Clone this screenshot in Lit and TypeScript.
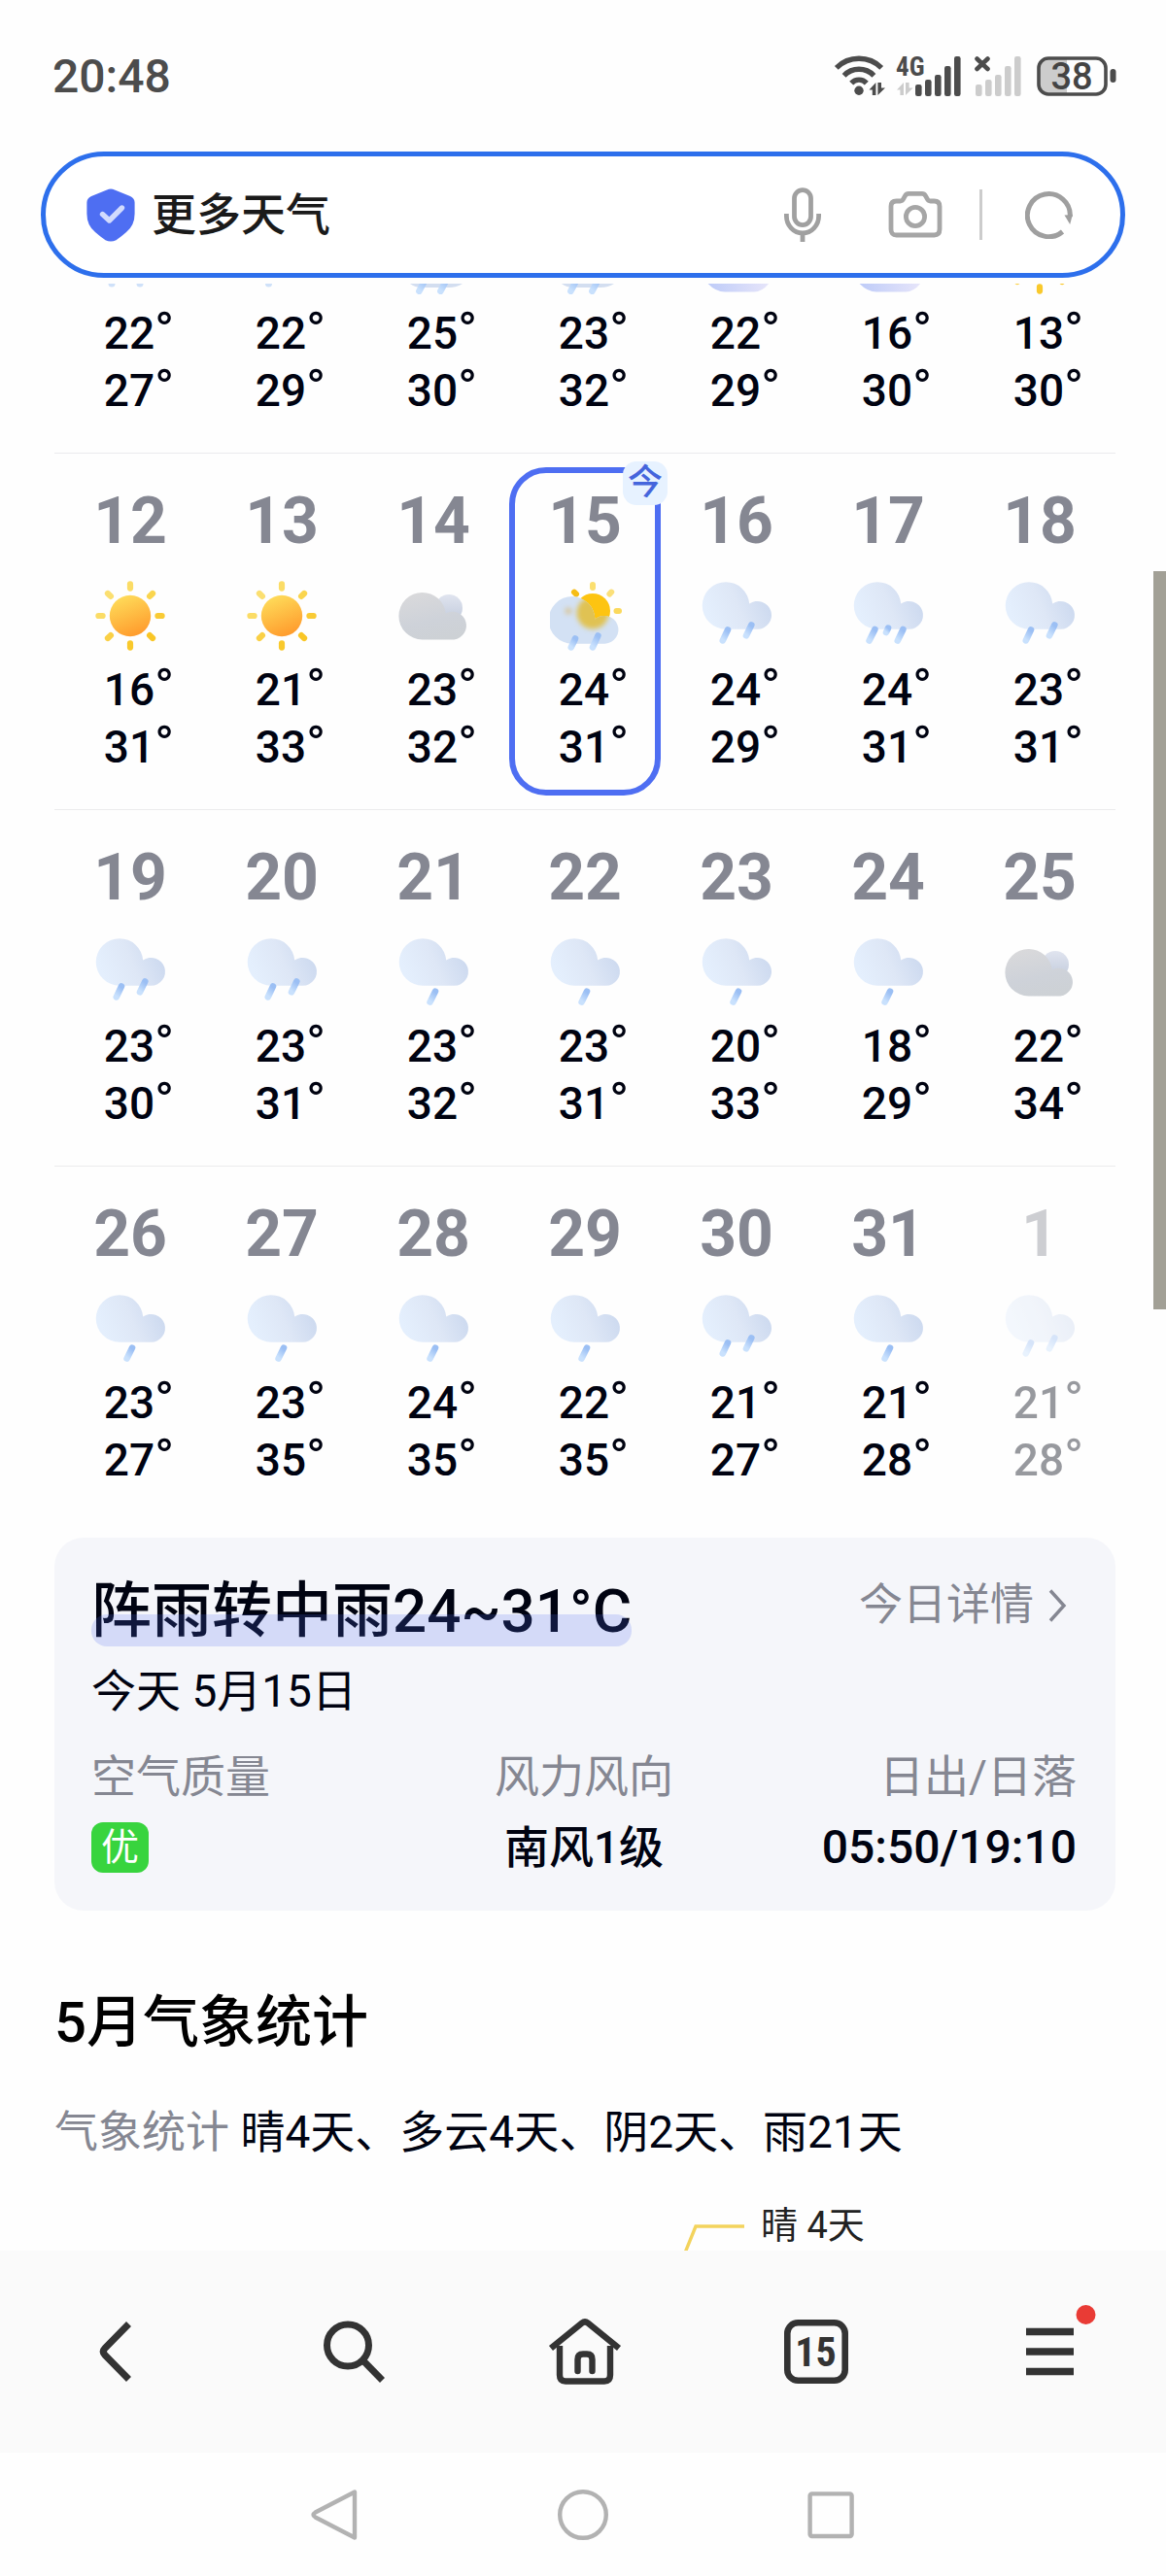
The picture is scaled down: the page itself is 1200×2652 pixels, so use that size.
import { LitElement, html, svg, css, nothing } from "lit";
import { customElement, property } from "lit/decorators.js";
import { classMap } from "lit/directives/class-map.js";

type Sky =
  | "sunny"
  | "overcast"
  | "today"
  | "rain1"
  | "rain2"
  | "rain3"
  | "tailTwo"
  | "tailOne"
  | "tailRain"
  | "tailCloud";

interface Day {
  date?: number;
  sky: Sky;
  low: number;
  high: number;
  today?: boolean;
  faded?: boolean;
}

const day = (date: number, sky: Sky, low: number, high: number): Day => ({ date, sky, low, high });

const WEEKS: Day[][] = [
  [
    { sky: "tailTwo", low: 22, high: 27 },
    { sky: "tailOne", low: 22, high: 29 },
    { sky: "tailRain", low: 25, high: 30 },
    { sky: "tailRain", low: 23, high: 32 },
    { sky: "tailCloud", low: 22, high: 29 },
    { sky: "tailCloud", low: 16, high: 30 },
    { sky: "sunny", low: 13, high: 30 },
  ],
  [
    day(12, "sunny", 16, 31),
    day(13, "sunny", 21, 33),
    day(14, "overcast", 23, 32),
    { date: 15, sky: "today", low: 24, high: 31, today: true },
    day(16, "rain2", 24, 29),
    day(17, "rain3", 24, 31),
    day(18, "rain2", 23, 31),
  ],
  [
    day(19, "rain2", 23, 30),
    day(20, "rain2", 23, 31),
    day(21, "rain1", 23, 32),
    day(22, "rain1", 23, 31),
    day(23, "rain1", 20, 33),
    day(24, "rain1", 18, 29),
    day(25, "overcast", 22, 34),
  ],
  [
    day(26, "rain1", 23, 27),
    day(27, "rain1", 23, 35),
    day(28, "rain1", 24, 35),
    day(29, "rain1", 22, 35),
    day(30, "rain2", 21, 27),
    day(31, "rain1", 21, 28),
    { date: 1, sky: "rain2", low: 21, high: 28, faded: true },
  ],
];

const RAY_COLORS = ["#fbdc66", "#fad54e", "#f9cb35", "#f9c626", "#f9c92c", "#fad046", "#fbdc66", "#fbdf70"];

const drop = (x1: number, y1: number, x2: number, y2: number) =>
  svg`<line x1=${x1} y1=${y1} x2=${x2} y2=${y2} stroke="url(#drop)" stroke-width="6.6" stroke-linecap="round"/>`;

const rainCloud = svg`<path fill="url(#rain)"
  d="M25 1.2A24.2 24.2 0 0 1 49.2 23.6A14.4 14.4 0 1 1 57.5 49.7H25A24.25 24.25 0 0 1 25 1.2Z"/>`;

@customElement("weather-icon")
export class WeatherIcon extends LitElement {
  @property() sky: Sky = "sunny";
  @property({ type: Boolean }) tail = false;

  static styles = css`
    :host { display: block; line-height: 0; }
    svg { display: block; }
  `;

  private art() {
    switch (this.sky) {
      case "sunny":
        return svg`
          ${RAY_COLORS.map((color, i) => {
            const a = ((i * 45 - 90) * Math.PI) / 180;
            const [c, s] = [Math.cos(a), Math.sin(a)];
            return svg`<line x1=${36 + c * 28.4} y1=${36 + s * 28.4} x2=${36 + c * 32.6} y2=${36 + s * 32.6}
              stroke=${color} stroke-width="6.2" stroke-linecap="round"/>`;
          })}
          <circle cx="36" cy="36" r="21.2" fill="url(#sun)"/>`;
      case "overcast":
        return svg`
          <circle cx="52" cy="28" r="14" fill="url(#back)"/>
          <path fill="url(#gray)" d="M24.6 12A24.2 24.2 0 0 1 48.8 33.4A14.4 14.4 0 1 1 57.4 60.4H24.6A24.2 24.2 0 0 1 24.6 12Z"/>`;
      case "today":
        return svg`
          <g stroke-width="6" stroke-linecap="round">
            <line x1="44" y1="4" x2="44" y2="7" stroke="#fbdf70"/>
            <line x1="61.4" y1="13.6" x2="63.2" y2="11.6" stroke="#fbe07a"/>
            <line x1="68.5" y1="31" x2="71" y2="31" stroke="#fbd95c"/>
            <line x1="25" y1="11.6" x2="27" y2="13.6" stroke="#f6bd16"/>
          </g>
          <circle cx="44" cy="31" r="18" fill="#fdc411"/>
          <g clip-path="url(#cloudClip)">
            <rect width="72" height="72" fill="#d3e1f4"/>
            <g filter="url(#soft)">
              <circle cx="44" cy="33" r="16.5" fill="#e0c253"/>
              <circle cx="19" cy="31" r="3.5" fill="#d9c79a"/>
            </g>
          </g>
          ${drop(26, 59.5, 21.8, 68.4)} ${drop(49.4, 56.5, 44, 68.4)}`;
      case "rain1":
        return svg`${rainCloud} ${drop(38, 55.6, 32.6, 66.6)}`;
      case "rain2":
        return svg`${rainCloud} ${drop(27, 50.4, 21.8, 61.4)} ${drop(51.3, 45.4, 46, 56.4)}`;
      case "rain3":
        return svg`${rainCloud} ${drop(22.4, 50, 16.6, 61.6)} ${drop(36, 48.6, 34, 53)} ${drop(51.4, 50, 45.8, 61.6)}`;
      case "tailTwo":
        return svg`<g fill="#cfe1f9"><circle cx="17" cy="61" r="3.5"/><circle cx="46" cy="61" r="3.5"/></g>`;
      case "tailOne":
        return svg`<circle cx="22.5" cy="61" r="3.5" fill="#cfe1f9"/>`;
      case "tailRain":
        return svg`
          <path d="M10 58L12 61Q17 65 24 65H52Q60 65 66 61L68 58Z" fill="#d3def0"/>
          ${drop(28, 56, 21.4, 68.8)} ${drop(50, 56, 43.4, 68.8)}`;
      case "tailCloud":
        return svg`<path d="M3 57Q13 69.5 24 69.5H54Q64 69.5 72 57Z" fill="url(#lilac)"/>`;
    }
  }

  render() {
    return html`<svg width="72" height=${this.tail ? 11 : 72} viewBox=${this.tail ? "0 61 72 11" : "0 0 72 72"} aria-hidden="true"
      overflow=${this.tail ? "hidden" : "visible"}>
      <defs>
        <linearGradient id="sun" x1="0.3" y1="0" x2="0.7" y2="1">
          <stop offset="0" stop-color="#fedc5a"/><stop offset="1" stop-color="#ff992b"/>
        </linearGradient>
        <linearGradient id="rain" x1="0.1" y1="0.75" x2="1" y2="0.5">
          <stop offset="0" stop-color="#e4effd"/><stop offset="0.5" stop-color="#dee7f6"/><stop offset="1" stop-color="#ccd9ef"/>
        </linearGradient>
        <linearGradient id="gray" x1="0.3" y1="0" x2="0.6" y2="1">
          <stop offset="0" stop-color="#d9d9db"/><stop offset="0.6" stop-color="#ced2d9"/><stop offset="1" stop-color="#cdd1d5"/>
        </linearGradient>
        <linearGradient id="back" x1="0.5" y1="0" x2="0.5" y2="1">
          <stop offset="0" stop-color="#e0e4ef"/><stop offset="1" stop-color="#c2cbdc"/>
        </linearGradient>
        <linearGradient id="lilac" x1="0" y1="0" x2="1" y2="0">
          <stop offset="0" stop-color="#bccaf8"/><stop offset="1" stop-color="#e8e6fa"/>
        </linearGradient>
        <linearGradient id="drop" x1="0.7" y1="0" x2="0.3" y2="1">
          <stop offset="0" stop-color="#9bbff4"/><stop offset="1" stop-color="#c9e1fd"/>
        </linearGradient>
        <clipPath id="cloudClip">
          <path d="M23 16A24 24 0 0 1 46.4 39.6A14.4 14.4 0 1 1 56.6 64.7H23A24.3 24.3 0 0 1 23 16Z"/>
        </clipPath>
        <filter id="soft" x="-50%" y="-50%" width="200%" height="200%"><feGaussianBlur stdDeviation="2.4"/></filter>
      </defs>
      ${this.art()}
    </svg>`;
  }
}

@customElement("month-calendar")
export class MonthCalendar extends LitElement {
  static styles = css`
    :host { display: block; }
    .week {
      display: grid;
      grid-template-columns: repeat(7, 1fr);
      border-bottom: 1px solid #ebebed;
    }
    .week:last-child { border-bottom: none; }
    .day {
      position: relative;
      display: flex;
      flex-direction: column;
      align-items: center;
      padding: 40px 0 34px;
    }
    .day.cut { padding-top: 0; }
    .date {
      font-size: 66px;
      line-height: 60px;
      font-weight: 700;
      color: #858792;
      margin-bottom: 31px;
    }
    .temps {
      margin-top: 11px;
      padding-left: 18px;
      font-size: 46px;
      line-height: 59px;
      font-weight: 500;
      color: #000311;
    }
    .temps div { white-space: nowrap; }
    .degree { font-size: 54px; line-height: 0; font-weight: 400; }
    .faded .date, .faded .temps, .faded weather-icon { opacity: 0.4; }
    .ring {
      position: absolute;
      inset: 14px 0;
      border: 6px solid #4e6ef2;
      border-radius: 38px;
      pointer-events: none;
    }
    .badge {
      position: absolute;
      top: 8px;
      right: -7px;
      width: 46px;
      border-radius: 14px;
      background: #e7f2ff;
      color: #4565dc;
      font-size: 36px;
      line-height: 45px;
      font-weight: 500;
      text-align: center;
    }
  `;

  private temp(value: number) {
    return html`<div>${value}<span class="degree">°</span></div>`;
  }

  render() {
    return WEEKS.map(
      (week) => html`<div class="week">
        ${week.map(
          (d) => html`<div class=${classMap({ day: true, cut: d.date === undefined, faded: !!d.faded })}>
            ${d.today ? html`<div class="ring"></div><div class="badge">今</div>` : nothing}
            ${d.date === undefined ? nothing : html`<div class="date">${d.date}</div>`}
            <weather-icon .sky=${d.sky} .tail=${d.date === undefined}></weather-icon>
            <div class="temps">${this.temp(d.low)}${this.temp(d.high)}</div>
          </div>`
        )}
      </div>`
    );
  }
}

const bars = (x: number, color: string) =>
  [29, 24, 19, 10, 0].map(
    (top, i) => svg`<rect x=${x + i * 10} y=${top} width="6.6" height=${41 - top} rx="2.2" fill=${color}/>`
  );

@customElement("app-root")
export class AppRoot extends LitElement {
  static styles = css`
    :host {
      display: block;
      font-family: Roboto, "Noto Sans CJK SC", sans-serif;
      color: #000311;
    }
    * { box-sizing: border-box; }
    svg { display: block; flex: none; }
    h1, h2, p, dl, dt, dd { margin: 0; font-weight: inherit; }
    button { border: 0; padding: 0; margin: 0; background: none; font: inherit; color: inherit; cursor: pointer; }
    .page {
      position: relative;
      display: flex;
      flex-direction: column;
      min-height: 100vh;
      background: #fefefe;
      overflow: hidden;
    }
    .status {
      display: flex;
      align-items: center;
      justify-content: space-between;
      padding: 50px 51px 48px 54px;
      font-size: 48px;
      line-height: 50px;
      font-weight: 500;
      color: #4c4c4c;
    }
    .signals { display: flex; align-items: center; gap: 14px; }
    .signals svg { overflow: visible; }
    .net { font: 700 27px "Liberation Sans Narrow", "Roboto Condensed", Roboto, sans-serif; }
    .level { font: 500 38px Roboto, sans-serif; }
    .search {
      display: flex;
      align-items: center;
      margin: 0 42px 6px;
      padding: 32px 49px 32px 42px;
      border: 5px solid #2d6fec;
      border-radius: 65px;
      background: #fff;
    }
    .query {
      flex: 1;
      min-width: 0;
      margin-left: 17px;
      padding: 0;
      border: 0;
      outline: 0;
      background: none;
      font-family: inherit;
      font-size: 46px;
      line-height: 56px;
      height: 56px;
      font-weight: 500;
      color: #1a1a1a;
    }
    .tools { display: flex; align-items: center; }
    .camera { margin-left: 69px; }
    .rule { width: 3px; height: 52px; margin: 0 44px 0 38px; background: #ccc; }
    main { flex: 1; padding: 0 52px 0 56px; overflow: hidden; }
    .card {
      margin-top: 16px;
      padding: 40px 40px 37px 38px;
      border-radius: 30px;
      background: #f5f6fa;
      font-size: 46px;
      line-height: 56px;
    }
    .card-head { display: flex; align-items: flex-start; justify-content: space-between; }
    .summary {
      position: relative;
      font-size: 62px;
      line-height: 72px;
      font-weight: 500;
    }
    .summary::after {
      content: "";
      position: absolute;
      inset: auto 0 0;
      height: 33px;
      border-radius: 16px;
      background: rgba(78, 110, 242, 0.2);
    }
    .detail {
      display: flex;
      align-items: center;
      gap: 14px;
      padding: 2px 10px 0 0;
      color: #858792;
      font-size: 45px;
      text-decoration: none;
    }
    .date { margin-top: 18px; }
    .facts { display: flex; justify-content: space-between; margin-top: 32px; }
    .facts dt { color: #858792; margin-bottom: 17px; }
    .facts dd { font-weight: 500; display: flex; align-items: center; min-height: 56px; }
    .fact:nth-child(1) { flex: 1; }
    .fact:nth-child(2) { text-align: center; }
    .fact:nth-child(2) dd { justify-content: center; }
    .fact:nth-child(3) { flex: 1; text-align: right; }
    .fact:nth-child(3) dd { justify-content: flex-end; font-size: 48px; }
    .good {
      width: 59px;
      border-radius: 12px;
      background: #38d43e;
      color: #fff;
      font-size: 39px;
      line-height: 52px;
      font-weight: 400;
      text-align: center;
    }
    .stats-title { margin-top: 79px; font-size: 58px; line-height: 72px; font-weight: 500; color: #000; }
    .stats { margin-top: 49px; font-size: 46px; line-height: 56px; }
    .stats-label { color: #858792; font-size: 45px; }
    .callout {
      display: flex;
      align-items: flex-end;
      gap: 17px;
      margin-top: 41px;
      padding-left: calc(50% + 102px);
      font-size: 38px;
      line-height: 52px;
      color: #222;
    }
    .toolbar { display: grid; grid-template-columns: repeat(5, 1fr); background: #fafafa; color: #333; }
    .toolbar button { display: flex; align-items: center; justify-content: center; padding: 70px 0; }
    .toolbar svg { overflow: visible; }
    .count { font: 700 42px "Liberation Sans Narrow", "Roboto Condensed", Roboto, sans-serif; }
    .system { display: flex; justify-content: center; align-items: center; gap: 203px; padding: 38px 0; background: #fefefe; }
    .thumb {
      position: absolute;
      top: 588px;
      right: 0;
      width: 13px;
      height: 760px;
      background: #a2a096;
    }
  `;

  private statusBar() {
    return html`<div class="status">
      <span>20:48</span>
      <div class="signals">
        <svg width="49" height="42" viewBox="0 0 49 42" fill="none" stroke="#4c4c4c" stroke-width="5.4">
          <path d="M1.8 11.8A33 33 0 0 1 48.2 11.8M9.6 19.8A21.5 21.5 0 0 1 40.4 19.8M17.2 27.6A10.5 10.5 0 0 1 32.8 27.6"/>
          <circle cx="25" cy="35.2" r="4.7" fill="#4c4c4c" stroke="none"/>
          <path d="M35.5 34.5L42.4 27V40H38.8V34.5ZM44.4 27H48V32.5H52L44.4 40Z" fill="#4c4c4c" stroke="none"/>
        </svg>
        <svg width="67" height="58" viewBox="0 -8 67 58">
          <text class="net" x="0" y="20" fill="#4c4c4c">4G</text>
          <path d="M1 34.5L8 27V40H4.4V34.5ZM10 27H13.6V32.5H17.6L10 40Z" fill="#ccc"/>
          ${bars(20, "#4c4c4c")}
        </svg>
        <svg width="48" height="42" viewBox="0 0 48 42">
          <path d="M2.5 2.5L13.5 13M13.5 2.5L2.5 13" stroke="#4c4c4c" stroke-width="4.6" stroke-linecap="round"/>
          ${bars(1, "#ccc")}
        </svg>
        <svg width="84" height="42" viewBox="-2 0 84 42">
          <path d="M12 3H31V38H12Q3 38 3 29V12Q3 3 12 3Z" fill="#ccc"/>
          <rect x="2" y="2" width="69" height="37" rx="10" fill="none" stroke="#4c4c4c" stroke-width="3.6"/>
          <rect x="75.5" y="13" width="6" height="14" rx="3" fill="#4c4c4c"/>
          <text class="level" x="36" y="34" text-anchor="middle" fill="#444">38</text>
        </svg>
      </div>
    </div>`;
  }

  private searchBar() {
    return html`<div class="search">
      <svg width="50" height="56" viewBox="0 0 50 56">
        <path d="M21 2.4Q25 0.4 29 2.4L45 9Q49.6 11 49.6 15.5V27Q49.6 39 41 46Q34 52 30.5 54.2Q25 56.8 19.5 54.2Q16 52 9 46Q0.4 39 0.4 27V15.5Q0.4 11 5 9Z" fill="#4e6ef2"/>
        <path d="M16.5 27.5L23.5 34L36.5 21" fill="none" stroke="#d2dbfd" stroke-width="5.4" stroke-linecap="round" stroke-linejoin="round"/>
      </svg>
      <input class="query" type="text" aria-label="搜索" .value=${"更多天气"} />
      <div class="tools">
        <button aria-label="语音">
          <svg width="38" height="56" viewBox="0 0 38 56" fill="none" stroke="#a0a0a0" stroke-width="4.8">
            <rect x="10.5" y="2.6" width="17" height="36" rx="8.5"/>
            <path d="M2.4 27V29.5A16.6 17.5 0 0 0 35.6 29.5V27M19 46V56"/>
          </svg>
        </button>
        <button class="camera" aria-label="拍照">
          <svg width="56" height="50" viewBox="0 0 56 50" fill="none" stroke="#a6a6a6" stroke-width="4.8">
            <path d="M8.5 11H12.5Q14.5 11 15.5 9.2L17.6 5.4Q18.8 3.4 21 3.4H35Q37.2 3.4 38.4 5.4L40.5 9.2Q41.5 11 43.5 11H47.5Q53 11 53 16.5V40Q53 46 47.5 46H8.5Q3 46 3 40V16.5Q3 11 8.5 11Z"/>
            <circle cx="28" cy="27" r="9.6"/>
          </svg>
        </button>
        <div class="rule"></div>
        <button aria-label="刷新">
          <svg width="49" height="50" viewBox="0 0 49 50" fill="none" stroke="#9f9f9f" stroke-width="5">
            <path d="M38.5 42.5A22 22 0 1 1 46.3 27"/>
            <path d="M40.5 25.5L48.8 25L46.2 35Z" fill="#9f9f9f" stroke="none"/>
          </svg>
        </button>
      </div>
    </div>`;
  }

  private card() {
    return html`<section class="card">
      <div class="card-head">
        <h1 class="summary">阵雨转中雨24~31°C</h1>
        <a class="detail" href="#today">今日详情
          <svg width="20" height="34" viewBox="0 0 20 34" fill="none" stroke="#858792" stroke-width="3.4"><path d="M3 1.5L17 17L3 32.5"/></svg>
        </a>
      </div>
      <p class="date">今天 5月15日</p>
      <dl class="facts">
        <div class="fact"><dt>空气质量</dt><dd><span class="good">优</span></dd></div>
        <div class="fact"><dt>风力风向</dt><dd>南风1级</dd></div>
        <div class="fact"><dt>日出/日落</dt><dd>05:50/19:10</dd></div>
      </dl>
    </section>`;
  }

  private toolbar() {
    return html`<nav class="toolbar">
      <button aria-label="后退">
        <svg width="36" height="62" viewBox="0 0 36 62" fill="none" stroke="#333" stroke-width="7">
          <path d="M30.5 2.5L6 27.5Q2.6 31 6 34.5L30.5 59.5"/>
        </svg>
      </button>
      <button aria-label="搜索">
        <svg width="64" height="64" viewBox="-3 0 64 64" fill="none" stroke="#333" stroke-width="7">
          <circle cx="27" cy="25.5" r="21.5"/><path d="M42.5 41L62.5 61.5"/>
        </svg>
      </button>
      <button aria-label="主页">
        <svg width="74" height="68" viewBox="-2 0 74 68" fill="none" stroke="#333" stroke-width="6.4">
          <path d="M2 30.5L34 4.6Q37 2.2 40 4.6L72 30.5"/>
          <path d="M11 28V58Q11 64.5 17 64.5H57Q63 64.5 63 58V28"/>
          <path d="M29.5 54V42Q29.5 36.5 35 36.5H39Q44.5 36.5 44.5 42V54" stroke-linecap="round"/>
        </svg>
      </button>
      <button aria-label="标签页">
        <svg width="66" height="66" viewBox="0 0 66 66">
          <rect x="3.3" y="3.3" width="59.4" height="59.4" rx="11" fill="none" stroke="#333" stroke-width="6.6"/>
          <text class="count" x="32.5" y="48" text-anchor="middle" fill="#333">15</text>
        </svg>
      </button>
      <button aria-label="菜单">
        <svg width="49" height="50" viewBox="0 0 49 50">
          <path d="M0 4.5H49M0 25H49M0 45.5H49" stroke="#333" stroke-width="7.6"/>
          <circle cx="61.5" cy="-13" r="10" fill="#e93b35"/>
        </svg>
      </button>
    </nav>`;
  }

  private systemNav() {
    return html`<nav class="system">
      <button aria-label="返回">
        <svg width="52" height="52" viewBox="0 0 52 52" fill="none" stroke="#b2b2b2" stroke-width="4.4" stroke-linejoin="round">
          <path d="M46 2.5V49.5L5.5 28.5Q1.5 26 5.5 23.5Z"/>
        </svg>
      </button>
      <button aria-label="桌面">
        <svg width="52" height="52" viewBox="0 0 52 52" fill="none" stroke="#b2b2b2" stroke-width="4.4"><circle cx="26" cy="26" r="23.8"/></svg>
      </button>
      <button aria-label="最近任务">
        <svg width="52" height="52" viewBox="0 0 52 52" fill="none" stroke="#b2b2b2" stroke-width="4.4"><rect x="4.6" y="4.4" width="43" height="43.6" rx="2"/></svg>
      </button>
    </nav>`;
  }

  render() {
    return html`<div class="page">
      <header>${this.statusBar()}${this.searchBar()}</header>
      <main>
        <month-calendar></month-calendar>
        ${this.card()}
        <h2 class="stats-title">5月气象统计</h2>
        <p class="stats"><span class="stats-label">气象统计</span> 晴4天、多云4天、阴2天、雨21天</p>
        <div class="callout">
          <svg width="62" height="27" viewBox="0 0 62 27" fill="none" stroke="#f3d35d" stroke-width="3.4"><path d="M1.5 28L12 2H62"/></svg>
          <span>晴 4天</span>
        </div>
      </main>
      ${this.toolbar()}${this.systemNav()}
      <div class="thumb"></div>
    </div>`;
  }
}
